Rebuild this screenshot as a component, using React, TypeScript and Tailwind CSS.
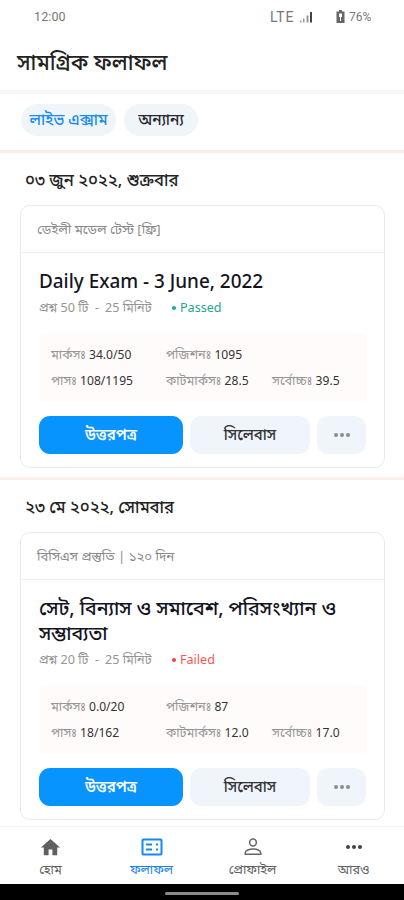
import type { ReactNode } from "react";
import { MdHome, MdMoreHoriz } from "react-icons/md";

type Exam = {
  date: string;
  group: string;
  title: string[];
  titleClass: string;
  questions: string;
  status: string;
  passed: boolean;
  marks: string;
  position: string;
  pass: string;
  cut: string;
  highest: string;
};

const exams: Exam[] = [
  {
    date: "০৩ জুন ২০২২, শুক্রবার",
    group: "ডেইলী মডেল টেস্ট [ফ্রি]",
    title: ["Daily Exam - 3 June, 2022"],
    titleClass: "text-[18.9px]",
    questions: "প্রশ্ন 50 টি",
    status: "Passed",
    passed: true,
    marks: "34.0/50",
    position: "1095",
    pass: "108/1195",
    cut: "28.5",
    highest: "39.5",
  },
  {
    date: "২৩ মে ২০২২, সোমবার",
    group: "বিসিএস প্রস্তুতি | ১২০ দিন",
    title: ["সেট, বিন্যাস ও সমাবেশ, পরিসংখ্যান ও", "সম্ভাব্যতা"],
    titleClass: "-mt-[1px] mb-[1px] text-[19.55px]",
    questions: "প্রশ্ন 20 টি",
    status: "Failed",
    passed: false,
    marks: "0.0/20",
    position: "87",
    pass: "18/162",
    cut: "12.0",
    highest: "17.0",
  },
];

function Stat({ label, value }: { label: string; value: string }) {
  return (
    <div className="h-[18px] whitespace-nowrap">
      <span className="text-[12.7px] text-[#969696]">{label}</span> <span className="text-[#333]">{value}</span>
    </div>
  );
}

function ExamCard({ exam }: { exam: Exam }) {
  return (
    <article className="ml-[20px] w-[365px] rounded-[10px] border border-[#e9e9ea] bg-white pb-[13px]">
      <div className="flex h-[47px] items-center border-b border-[#eeeeee] pl-[16px] pt-[1px] text-[13.2px] text-[#8a8a8a]">
        {exam.group}
      </div>
      <div className="pl-[18px] pr-[17px] pt-[16px]">
        <h2 className={`font-medium text-[#14141f] ${exam.titleClass}`}>
          {exam.title.map((line) => (
            <span key={line} className="block h-[25px] whitespace-nowrap leading-[25px]">
              {line}
            </span>
          ))}
        </h2>
        <div className="flex h-[28px] items-center whitespace-nowrap text-[12.6px] text-[#969696]">
          <span className="w-[56px]">{exam.questions}</span>
          <span className="w-[10px]">-</span>
          <span className="w-[67px]">25 মিনিট</span>
          <span className={exam.passed ? "flex items-center text-[#1fa595]" : "flex items-center text-[#fa5650]"}>
            <i className={exam.passed ? "mr-[4px] size-[4px] rounded-full bg-[#1fa595]" : "mr-[4px] size-[4px] rounded-full bg-[#f5433c]"} />
            {exam.status}
          </span>
        </div>
        <div className="mt-[12px] grid h-[67px] grid-cols-[115px_106px_auto] content-center gap-y-[8px] rounded bg-[#fffbfa] pb-[2px] pl-[12px] text-[12.1px] leading-[18px]">
          <Stat label="মার্কসঃ" value={exam.marks} />
          <Stat label="পজিশনঃ" value={exam.position} />
          <span />
          <Stat label="পাসঃ" value={exam.pass} />
          <Stat label="কাটমার্কসঃ" value={exam.cut} />
          <Stat label="সর্বোচ্চঃ" value={exam.highest} />
        </div>
        <div className="mt-[15px] flex gap-[7px]">
          <button className="h-[38px] w-[144px] rounded-[11px] bg-[#0794ff] pb-[2px] text-[15px] font-semibold text-white">উত্তরপত্র</button>
          <button className="h-[38px] w-[120px] rounded-[11px] bg-[#f0f5fb] pb-[2px] text-[15px] font-medium text-[#333]">সিলেবাস</button>
          <button className="flex h-[38px] w-[49px] items-center justify-center gap-[2px] rounded-[11px] bg-[#f0f5fb]">
            <i className="size-[4px] rounded-full bg-[#8a8d92]" />
            <i className="size-[4px] rounded-full bg-[#8a8d92]" />
            <i className="size-[4px] rounded-full bg-[#8a8d92]" />
          </button>
        </div>
      </div>
    </article>
  );
}

function NavItem({ icon, label, active }: { icon: ReactNode; label: string; active?: boolean }) {
  return (
    <div className={`flex flex-1 flex-col items-center pt-[8px] text-[12.7px] ${active ? "text-[#1683ed]" : "text-[#606060]"}`}>
      <div className="flex h-[24px] items-center">{icon}</div>
      <span className="h-[20px] leading-[20px]">{label}</span>
    </div>
  );
}

export default function App() {
  return (
    <div className="flex h-[900px] w-[404px] flex-col overflow-hidden bg-white font-['Noto_Sans','Noto_Sans_Bengali',sans-serif]">
      <div className="flex h-[34px] shrink-0 items-center pl-[34px] font-[Roboto,sans-serif] text-[12.5px] text-[#777]">
        <span className="w-[236px] tracking-[0.1px]">12:00</span>
        <span className="w-[30px] text-[14px] tracking-[0.7px]">LTE</span>
        <svg className="w-[36px]" width="36" height="14" fill="#666">
          <path d="M0 10.5h1.5v2H0zM3 8.5h1.5v4H3zM6.5 5.5h2v7h-2z" fill="#999" />
          <path d="M10 2h2v10.5h-2z" fill="#444" />
        </svg>
        <svg className="mr-[4px]" width="9" height="14" viewBox="0 0 9 14">
          <path d="M3 0h3v1.5h2.5V13h-8V1.5H3z" fill="#666" />
          <path d="M3 3.5h3v3.5H5V11H4V7H3z" fill="white" />
        </svg>
        <span className="text-[12px]">76%</span>
      </div>
      <header className="flex h-[56px] shrink-0 items-center pl-[17px] text-[21.6px] font-medium text-[#222]">সামগ্রিক ফলাফল</header>
      <div className="h-[4px] shrink-0 bg-[#f7f7f7]" />
      <div className="flex h-[56px] shrink-0 gap-[8px] pl-[21px] pt-[10px] text-[15.5px] font-medium">
        <span className="flex h-[32px] w-[95px] items-center justify-center rounded-full bg-[#f0f5fa] text-[#168cf5]">লাইভ এক্সাম</span>
        <span className="flex h-[32px] w-[74px] items-center justify-center rounded-full bg-[#f0f5fa] text-[#252830]">অন্যান্য</span>
      </div>
      {exams.map((exam, i) => (
        <section key={exam.date} className={i === 0 ? "h-[327px] shrink-0" : "h-[349px] shrink-0"}>
          <div className="h-[3px] bg-[#ffece8]" />
          <div className="flex h-[52px] items-center pl-[25px] pt-[3px] text-[16.6px] font-medium text-[#222]">{exam.date}</div>
          <ExamCard exam={exam} />
        </section>
      ))}
      <nav className="flex h-[58px] shrink-0 border-t border-[#f4f4f4] bg-white">
        <NavItem icon={<MdHome size={23} />} label="হোম" />
        <NavItem
          active
          icon={
            <svg width="22" height="18" viewBox="0 0 22 18" fill="none" stroke="#1487f2" strokeWidth="2">
              <rect x="1.5" y="1.5" width="19" height="15" rx="1" />
              <path d="M5 6.5h6M5 11.5h6M15 6.5h2M15 11.5h2" />
            </svg>
          }
          label="ফলাফল"
        />
        <NavItem
          icon={
            <svg width="20" height="20" viewBox="0 0 20 20" fill="none" stroke="#666" strokeWidth="1.5">
              <circle cx="10" cy="5.5" r="3.4" />
              <path d="M2.2 17.3v-1.2c0-2.7 4.2-4.2 7.8-4.2s7.8 1.5 7.8 4.2v1.2z" />
            </svg>
          }
          label="প্রোফাইল"
        />
        <NavItem icon={<MdMoreHoriz size={24} color="#444" />} label="আরও" />
      </nav>
      <div className="flex h-[16px] shrink-0 justify-center bg-black pt-[8px]">
        <i className="h-[3px] w-[74px] rounded-full bg-[#8a8a8a]" />
      </div>
    </div>
  );
}
